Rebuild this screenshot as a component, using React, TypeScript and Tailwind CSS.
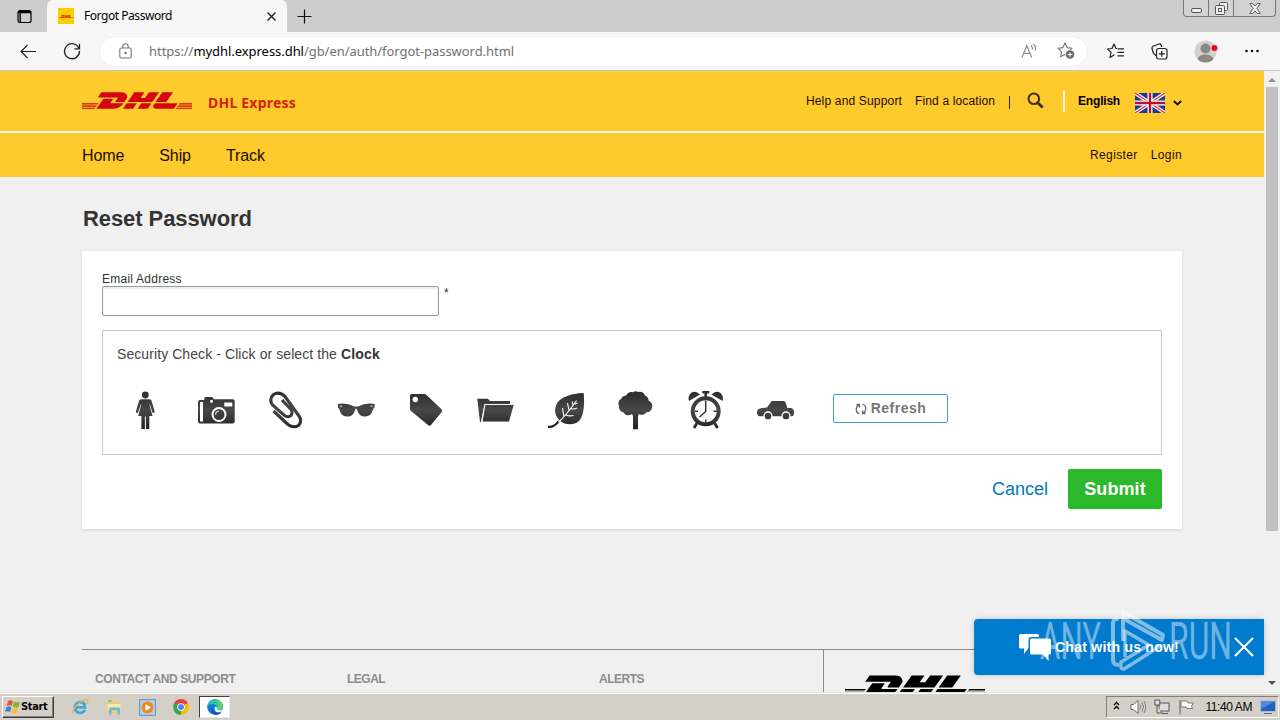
import React from 'react';
import { FaDhl } from 'react-icons/fa';

const INK = 'url(#ink)';

const TitleBar: React.FC = () => (
  <div className="h-8 shrink-0 flex bg-[#cdcdcd]">
    <div className="w-[47px] flex items-center pl-[17px]">
      <svg className="w-[15px] h-[15px]" viewBox="0 0 15 15" fill="none" stroke="#000">
        <rect x="1" y="1.5" width="13" height="12" rx="2" strokeWidth="1.2" />
        <path d="M1 3.2h13M2 2.2h11" strokeWidth="2" />
        <path d="M3.2 4v9" strokeWidth="1.4" />
      </svg>
    </div>
    <div className="w-60 flex items-center rounded-t-md bg-[#f7f7f7] pl-[11px] pr-2.5">
      <div className="w-4 h-4 bg-[#fc0] flex items-center justify-center">
        <FaDhl viewBox="0 205 640 102" preserveAspectRatio="none" className="w-[14px] h-[3px] text-[#d40511]" />
      </div>
      <span className="ml-2.5 text-[12px] leading-4 tracking-[-0.45px] text-black whitespace-nowrap">Forgot Password</span>
      <svg className="ml-auto w-[11px] h-[11px]" viewBox="0 0 11 11" stroke="#222" strokeWidth="1.4">
        <path d="M1.5 1.5l8 8M9.5 1.5l-8 8" />
      </svg>
    </div>
    <div className="pl-2.5 flex items-center">
      <svg className="w-[15px] h-[15px]" viewBox="0 0 15 15" stroke="#111" strokeWidth="1.2">
        <path d="M7.5 .5v14M.5 7.5h14" />
      </svg>
    </div>
    <div className="ml-auto mr-1 w-[93px] h-[17px] flex border border-t-0 border-[#777] rounded-b-[4px] bg-[#d2d2d2]">
      <div className="w-[25px] border-r border-[#777] flex items-end justify-center pb-[3px]">
        <div className="w-[11px] h-[5px] border border-[#555] rounded-[2px] bg-[#eee]" />
      </div>
      <div className="w-[25px] border-r border-[#777] flex items-center justify-center">
        <svg className="w-[13px] h-[13px]" viewBox="0 0 13 13" fill="#eee" stroke="#555">
          <rect x="4.5" y=".5" width="8" height="8" rx="1" />
          <rect x=".5" y="3.5" width="9" height="9" rx="1" />
          <rect x="3.5" y="6.5" width="3" height="3" />
        </svg>
      </div>
      <div className="flex-1 flex items-center justify-center">
        <svg className="w-[12px] h-[11px]" viewBox="0 0 12 11" fill="#eee" stroke="#555" strokeWidth=".9">
          <path d="M.8.5h3L6 3l2.200-2.500h3L8 5.500l3.200 5h-3L6 8l-2.200 2.500h-3L4 5.500z" />
        </svg>
      </div>
    </div>
  </div>
);

const Toolbar: React.FC = () => (
  <div className="h-[39px] shrink-0 flex items-center bg-[#f7f7f7] border-b border-[#c8c8c8]">
    <svg className="ml-5 w-4 h-[15px]" viewBox="0 0 16 15" fill="none" stroke="#222" strokeWidth="1.2">
      <path d="M16 7.500H1M7.500 1L1 7.500 7.500 14" />
    </svg>
    <svg className="ml-[27px] w-[18px] h-[18px]" viewBox="0 0 18 18" fill="none" stroke="#222" strokeWidth="1.3">
      <path d="M16 6.500A7.500 7.500 0 1 0 16.500 9" />
      <path d="M16.500 1.800v5h-5" />
    </svg>
    <div className="ml-[18px] w-[989px] h-[31px] rounded-full bg-white border border-[#f1eff4] flex items-center pl-[19px] pr-3">
      <svg className="w-[13px] h-4" viewBox="0 0 13 16" fill="none" stroke="#777" strokeWidth="1.1">
        <rect x=".8" y="5" width="11.4" height="10" rx="1.5" />
        <path d="M3.800 5V3.500a2.700 2.700 0 0 1 5.400 0V5" />
        <circle cx="6.5" cy="10" r=".7" fill="#777" />
      </svg>
      <div className="ml-[17px] text-[13px] leading-5 tracking-[-0.05px] text-[#707070] whitespace-nowrap">
        https://<span className="text-black">mydhl.express.dhl</span>/gb/en/auth/forgot-password.html
      </div>
      <svg className="ml-auto w-4 h-4" viewBox="0 0 16 16" fill="none" stroke="#888" strokeWidth="1.1">
        <path d="M1 14.500L5.800 2.500l4.800 12M2.700 10.500h6.200" />
        <path d="M10 2.500a4 4 0 0 1 1.300 4M12.300 1a6 6 0 0 1 1.900 6.500" />
      </svg>
      <svg className="ml-5 w-[18px] h-[18px]" viewBox="0 0 18 18" fill="none" stroke="#777" strokeWidth="1.1">
        <path d="M8 1l2.100 4.600 5 .6-3.700 3.500.8 4L8 12.500l-4.400 2.300.9-5L1 6.200l4.900-.6z" strokeLinejoin="round" />
        <circle cx="13" cy="12.5" r="4.5" fill="#666" stroke="#fff" strokeWidth=".6" />
        <path d="M13 10.200v4.600M10.700 12.500h4.600" stroke="#fff" />
      </svg>
    </div>
    <svg className="ml-[19px] w-[17px] h-4" viewBox="0 0 17 16" fill="none" stroke="#222" strokeWidth="1.2">
      <path d="M10 5.500H9L7 1 5 5.500l-4.500.5L4 9.300 3 14.500l4.500-2.700M10.500 5.800H17M10.500 9.300H17M10.500 12.800H17" strokeLinejoin="round" />
    </svg>
    <svg className="ml-[27px] w-[17px] h-[17px]" viewBox="0 0 17 17" fill="none" stroke="#222" strokeWidth="1.2">
      <path d="M5 12.500L2.500 10.500 1 5.500Q.7 4 2 3.300L8 1q1.500-.4 2 1l.8 2" />
      <rect x="5.5" y="5.5" width="10.5" height="10.5" rx="2.2" />
      <path d="M10.750 7.800v6M7.800 10.800h6" />
    </svg>
    <svg className="ml-[26px] w-6 h-[23px]" viewBox="0 0 24 23">
      <circle cx="11.5" cy="11.5" r="11" fill="#d3d1ce" />
      <circle cx="11.5" cy="8.5" r="5" fill="#8d8785" />
      <path d="M3.500 19q1.500-4.500 8-4.500t8 4.500q-3 3.500-8 3.500t-8-3.500z" fill="#8d8785" />
      <circle cx="20.5" cy="8" r="3" fill="#e0101c" />
    </svg>
    <svg className="ml-[26px] w-4 h-4" viewBox="0 0 16 16" fill="#111">
      <circle cx="2.5" cy="8" r="1.3" />
      <circle cx="8" cy="8" r="1.3" />
      <circle cx="13.5" cy="8" r="1.3" />
    </svg>
  </div>
);

const Flag: React.FC = () => (
  <svg className="w-[30px] h-5" viewBox="0 0 30 20">
    <rect width="30" height="20" rx="1" fill="#1b3a8c" />
    <path d="M0 0l30 20M30 0L0 20" stroke="#fff" strokeWidth="3.6" />
    <path d="M0 0l30 20M30 0L0 20" stroke="#d8324a" strokeWidth="1.3" />
    <path d="M15 0v20M0 10h30" stroke="#fff" strokeWidth="5" />
    <path d="M15 0v20M0 10h30" stroke="#b8102e" strokeWidth="2.4" />
  </svg>
);

const SiteHeader: React.FC = () => (
  <header className="shrink-0 text-[#1a0d00] bg-[#ffca2c]">
    <div className="h-[60px] pl-[82px] pr-[82px] flex">
      <FaDhl viewBox="0 209 640 93" preserveAspectRatio="none" className="mt-[21px] w-[110px] h-[17px] text-[#d40511]" />
      <span className="ml-4 mt-[22px] font-['Noto_Sans'] font-bold text-[14px] leading-5 tracking-[0.22px] text-[#d8200f] whitespace-nowrap">DHL Express</span>
      <div className="ml-auto flex items-start text-[12px] leading-4 whitespace-nowrap">
        <span className="mt-[22px] tracking-[0.17px]">Help and Support</span>
        <span className="ml-[13px] mt-[22px] tracking-[0.13px]">Find a location</span>
        <div className="ml-3.5 mt-[25px] w-px h-[13px] bg-[#222]" />
        <svg className="ml-[17px] mt-[21px] w-[17px] h-[17px]" viewBox="0 0 17 17" fill="none" stroke="#3c2c0c">
          <circle cx="6.8" cy="6.8" r="5.3" strokeWidth="2" />
          <path d="M10.700 10.700l5 4.800" strokeWidth="2.8" />
        </svg>
        <div className="ml-[19px] mt-5 w-0.5 h-[21px] bg-[#fff6d8]" />
        <span className="ml-[13px] mt-[22px] font-bold text-black tracking-[-0.2px]">English</span>
        <div className="ml-[15px] mt-[22px]"><Flag /></div>
        <svg className="ml-2 mt-[29px] w-[9px] h-[6px]" viewBox="0 0 9 6" fill="none" stroke="#111" strokeWidth="1.9">
          <path d="M.8 1l3.700 3.500L8.200 1" />
        </svg>
      </div>
    </div>
    <div className="h-0.5 bg-[#fff9e6]" />
    <nav className="h-11 px-[82px] flex items-center text-[16px]">
      <div className="flex gap-[35px] pt-0.5 tracking-[-0.1px]">
        <span>Home</span>
        <span>Ship</span>
        <span>Track</span>
      </div>
      <div className="ml-auto flex gap-[13px] text-[12px] tracking-[0.38px]">
        <span>Register</span>
        <span>Login</span>
      </div>
    </nav>
  </header>
);

const captchaIcons: { name: string; art: React.ReactNode }[] = [
  {
    name: 'Woman',
    art: (
      <>
        <circle cx="20.3" cy="5" r="3.4" />
        <path d="M16 9.300h8.700q1.300 0 1.800 1.500l3.200 10.500q.2 1.500-1.200 1.700-1 0-1.400-1.200L25 14.500h-.6L27.500 26h-3.200v13h-3.400V26.500h-1V39h-3.500V26h-3.200l3-11.500h-.6l-2.200 7.300q-.5 1.300-1.500 1.200-1.300-.3-1-1.700l3.200-10.500q.6-1.500 1.900-1.500z" />
      </>
    ),
  },
  {
    name: 'Camera',
    art: (
      <>
        <path d="M5 10h4.300V8.500Q9.300 7 10.800 7h6q1.500 0 1.500 1.500l.4.800h19q2 0 2 2V31.500q0 2-2 2H5q-2 0-2-2V12q0-2 2-2z" />
        <path d="M5 12h3v19.500H5zM29.300 12.500h8v4h-8z" fill="#fff" />
        <circle cx="16.5" cy="11.3" r="1.5" fill="#fff" />
        <circle cx="24" cy="24.5" r="6.5" stroke="#fff" strokeWidth="2" />
        <path d="M20.500 25q0-3.500 3.500-3.800" fill="none" stroke="#ccc" strokeWidth="1.2" />
      </>
    ),
  },
  {
    name: 'Paperclip',
    art: (
      <path
        d="M8.500 21L23 34.500Q28.500 38.500 33.500 35.500 37.500 31 34 26L20 6.500Q14.500 1 8.500 4.500 3.500 9 7.500 15L19.500 25.500Q23.500 28 26 25.500 28 22.500 26 19.500L17 10"
        fill="none"
        stroke={INK}
        strokeWidth="3.1"
      />
    ),
  },
  {
    name: 'Sunglasses',
    art: (
      <>
        <path d="M2.800 14q9-1.500 16.500 2.500h3.800Q30.500 12.500 39.700 14l-.4 4q-1.200 0-1.500 2-1.500 6-7.500 6.500-6 .3-8-6-.5-2-1.200-2t-1.200 2q-2 6.500-8 6-6-.5-7.300-6.500-.3-2-1.500-2z" />
        <path d="M5 15.500h2v1.500H5zM35.500 15.500h2v1.500h-2z" fill="#bbb" />
      </>
    ),
  },
  {
    name: 'Tag',
    art: (
      <>
        <path d="M6.500 4h12.500q1.500 0 2.500 1L36.500 19.200q1.300 1.500 0 3L26 35q-1.500 1.500-3 0L6 21q-1-1-1-2.500V5.500Q5 4 6.500 4z" />
        <circle cx="10.3" cy="9.5" r="2.7" fill="#fff" />
      </>
    ),
  },
  {
    name: 'Folder',
    art: (
      <>
        <path d="M2.300 8.700h10.500L15 11h20v3H9.500L5.800 32H5z" />
        <path d="M10 14.500h29.300L34.300 32H7z" stroke="#fff" strokeWidth=".9" />
      </>
    ),
  },
  {
    name: 'Leaf',
    art: (
      <>
        <path d="M38.700 3Q40.500 24 34 31q-6 5-14.500 2.500L15 31Q6.500 22 12.500 12.500 19 4 38.700 3z" />
        <path d="M3 36.800q6 .8 11-6" fill="none" stroke="#222" strokeWidth="2.2" />
        <path d="M13.500 32Q20 27 31.500 10.500M19 27l-1.500-9M24 20.500L22.500 13M28 15.500l-.8-4M20.500 25q4 1.500 8 .5M25 18.500q4 1.200 7-.5M28.500 14.500l4-1.500" fill="none" stroke="#fff" strokeWidth="1.1" />
      </>
    ),
  },
  {
    name: 'Tree',
    art: (
      <path d="M11 5.500q2.500-4.500 7-3.300 2.500-2 5-.2 5-1.300 7 3.500 3.500 1.300 3.500 5 5 3 3.500 7.500-1.500 4.500-5.500 4.300-3 4-7.500 1.700L23 26v13.300h-5V26l-1-2q-5.500 3-8.500-1.500-5-1.500-4.500-6.500-2-5 2.500-7.500.5-2.500 4.500-3z" />
    ),
  },
  {
    name: 'Clock',
    art: (
      <>
        <circle cx="20.7" cy="21.3" r="13" fill="#fff" stroke={INK} strokeWidth="4" />
        <path d="M4 11Q2.500 6 6 3q4.500-3 9 1.500zM37.500 11Q39 6 35.500 3 31 0 26.500 4.500zM17.300 1h7v2.500H22V7h-2.600V3.500h-2.100z" />
        <path d="M12 33l-3 5M29.500 33l3 5" fill="none" stroke={INK} strokeWidth="2.8" />
        <path d="M20.700 10.500v11L14.500 27M20.700 29.500v3M9.500 21.300h3.500M28.500 21.300h3.500" fill="none" stroke="#333" strokeWidth="1.5" />
      </>
    ),
  },
  {
    name: 'Car',
    art: (
      <>
        <path d="M17.500 11h11q1.500 0 2 1.500l2 5.500h3.500q3 .5 3 4.500t-2.500 3.700H5Q2 26 2 22.500q0-3.500 3-4 4-.8 7-1l4-5.500q.5-1 1.500-1z" />
        <circle cx="13" cy="26" r="4" stroke="#fff" strokeWidth="1.3" />
        <circle cx="31" cy="26" r="4" stroke="#fff" strokeWidth="1.3" />
      </>
    ),
  },
];

const SecurityCheck: React.FC = () => (
  <div className="mt-3.5 h-[125px] border border-[#c8c8c8] pl-3.5 pt-[13px]">
    <p className="text-[14px] leading-5 tracking-[0.08px] text-[#444] whitespace-nowrap">
      Security Check - Click or select the <b className="tracking-[0.2px] text-[#333]">Clock</b>
    </p>
    <div className="mt-[26px] pl-2 flex gap-[30px]">
      {captchaIcons.map((icon) => (
        <svg key={icon.name} aria-label={icon.name} className="w-10 h-10" viewBox="0 0 40 40" fill={INK}>
          {icon.art}
        </svg>
      ))}
      <button className="ml-2 mt-1 w-[115px] h-[29px] rounded-[2px] border border-[#3b9fd8] bg-white flex items-center justify-center gap-1 text-[14px] font-bold tracking-[0.5px] text-[#777]">
        <svg className="w-3 h-3" viewBox="0 0 12 12" fill="none" stroke="#666" strokeWidth="1.3">
          <path d="M4.500 11Q1 9.500 1.200 6 1.500 3 4 1.800M1.500 1.500h3v3M7.500 1Q11 2.500 10.800 6 10.500 9 8 10.200M10.500 10.500h-3v-3" />
        </svg>
        Refresh
      </button>
    </div>
  </div>
);

const ResetForm: React.FC = () => (
  <main className="px-[82px]">
    <h1 className="mt-[26px] h-8 pl-px leading-8 text-[22px] font-bold tracking-[-0.08px] text-[#333]">Reset Password</h1>
    <section className="mt-4 h-[278px] bg-white px-5 pt-[21px] shadow-[0_1px_3px_rgba(0,0,0,0.12)]">
      <label className="block h-3.5 text-[12px] leading-[15px] tracking-[0.24px] text-[#333]">Email Address</label>
      <div className="flex">
        <input className="w-[337px] h-[30px] rounded-[2px] border border-[#999] bg-white shadow-[inset_0_2px_2px_rgba(0,0,0,0.08)]" />
        <span className="ml-[5px] text-[12px] leading-[14px] text-[#333]">*</span>
      </div>
      <SecurityCheck />
      <div className="mt-3.5 flex justify-end items-center text-[18px]">
        <a className="text-[#007bbd]">Cancel</a>
        <button className="ml-5 w-[94px] h-10 rounded-[2px] bg-[#2bb92b] font-bold tracking-[0.1px] text-white">Submit</button>
      </div>
    </section>
  </main>
);

const SiteFooter: React.FC = () => (
  <footer className="mt-[120px] mx-[82px] h-[43px] flex border-t border-[#8c8c8c] text-[12px] leading-4 font-bold tracking-[-0.5px] text-[#8c8c8c] overflow-hidden">
    <div className="w-[742px] border-r border-[#8c8c8c] pl-[13px] pt-[21px] flex">
      <span className="w-[252px] tracking-[-0.4px]">CONTACT AND SUPPORT</span>
      <span className="w-[252px]">LEGAL</span>
      <span>ALERTS</span>
    </div>
    <FaDhl viewBox="0 209 640 93" preserveAspectRatio="none" className="shrink-0 ml-[21px] mt-[25px] w-[140px] h-[21px] text-black" />
  </footer>
);

const Scrollbar: React.FC = () => (
  <div className="w-4 shrink-0 bg-[#f1f1f1] flex flex-col items-center">
    <svg className="w-2 h-4" viewBox="0 0 8 16" fill="#8b8b8b"><path d="M0 11l4-4 4 4z" /></svg>
    <div className="w-3 h-[444px] bg-[#c1c1c1]" />
    <svg className="mt-auto mb-px w-2 h-4" viewBox="0 0 8 16" fill="#505050"><path d="M0 6l4 4 4-4z" /></svg>
  </div>
);

const ChatWidget: React.FC = () => (
  <div className="absolute left-[974px] top-[548px] w-[290px] h-14 rounded-l-[4px] bg-[#007bcd] shadow-[0_0_5px_rgba(0,0,0,0.2)] flex items-center pl-[45px]">
    <svg className="w-[33px] h-[27px]" viewBox="0 0 33 27" fill="#fff">
      <path d="M1.500 0h17q1.500 0 1.500 1.500V3h-8q-2.500 0-2.500 2.500V14L5 20v-5.500H1.500Q0 14.500 0 13V1.500Q0 0 1.500 0z" />
      <path d="M12.500 4.500h18q1.500 0 1.500 1.500v13q0 1.500-1.500 1.500H29.500V27L24 20.500H12.500Q11 20.500 11 19V6q0-1.500 1.500-1.500z" />
    </svg>
    <span className="ml-[3px] text-[14px] font-bold tracking-[0.25px] text-white whitespace-nowrap">Chat with us now!</span>
    <svg className="ml-auto mr-2.5 w-5 h-5" viewBox="0 0 20 20" stroke="#fff" strokeWidth="2">
      <path d="M1 1l18 18M19 1L1 19" />
    </svg>
  </div>
);

const Watermark: React.FC = () => (
  <svg className="absolute left-[1036px] top-[536px] w-[210px] h-[70px] pointer-events-none" viewBox="0 0 210 70" fill="#fff" fillOpacity=".45">
    <g fontFamily="Roboto, sans-serif" fontWeight="400" fontSize="52">
      <text x="4" y="52" textLength="61" lengthAdjust="spacingAndGlyphs">ANY</text>
      <text x="133" y="52" textLength="63" lengthAdjust="spacingAndGlyphs">RUN</text>
    </g>
    <g fill="none" stroke="#fff" strokeOpacity=".5" strokeWidth="4" strokeLinejoin="round">
      <path d="M83 12q-6-1-6 5v36q0 5 6 5" />
      <path d="M87 34V5l40 23-1 5-38-21" />
      <path d="M126 38L88 62q-4 1-3-7l28-17-24-14v26" strokeWidth="3.4" />
    </g>
  </svg>
);

const StartButton: React.FC = () => (
  <button className="w-[52px] h-[22px] flex items-center pl-0.5 bg-[#d4d0c8] border border-t-white border-l-white border-r-[#404040] border-b-[#404040] shadow-[inset_-1px_-1px_0_#808080] font-['DejaVu_Sans_Condensed','DejaVu_Sans'] text-[11px] font-bold tracking-[-0.35px] text-black">
    <svg className="w-4 h-4" viewBox="0 0 16 16">
      <path d="M3 2q2.500-1.500 5 0L6.700 7q-2.500-1.500-5 0z" fill="#e8552b" />
      <path d="M9 2.500q2.500 1.500 6 .3L13.500 8q-3 1-5.800-.5z" fill="#7cb83a" />
      <path d="M1.400 8.200q2.500-1.500 5 0L5 13q-2.500-1.500-5 0z" fill="#3b7fd0" />
      <path d="M7.400 8.700q2.800 1.500 5.800.4L11.800 14q-3 1-5.800-.5z" fill="#f6c12c" />
    </svg>
    Start
  </button>
);

const Taskbar: React.FC = () => (
  <div className="h-7 shrink-0 flex items-center pl-0.5 pr-px pt-px bg-[#d4d0c8] border-t border-[#e4e2dd] shadow-[inset_0_1px_0_#fff]">
    <StartButton />
    <svg className="ml-[17px] w-[18px] h-[18px]" viewBox="0 0 18 18" fill="none">
      <path d="M14 12Q12 15 8.800 14.800 4 14 4 9.500T8.800 4Q14 4 14 9.300H4.500" stroke="#39a7e0" strokeWidth="2.8" />
      <path d="M2.500 15.500Q0 13 6 7T16.500 2q1 1-.5 4" stroke="#efb92b" strokeWidth="1.3" />
    </svg>
    <svg className="ml-4 w-[18px] h-[18px]" viewBox="0 0 18 18">
      <path d="M2 4l1-1.500h5L9 4h6v11H2z" fill="#e9cf74" />
      <path d="M3.500 2h3v2h-3z" fill="#7ac36a" />
      <path d="M2.500 6h13v6h-13z" fill="#f7e9a8" />
      <path d="M4 16.500V11q0-1.500 1.500-1.500h8q1.500 0 1.500 1.500v5.500h-2.500V12h-6v4.500z" fill="#6db4de" />
    </svg>
    <svg className="ml-4 w-[17px] h-[17px]" viewBox="0 0 17 17">
      <rect x=".7" y=".7" width="15.6" height="15.6" fill="#b4d3ee" stroke="#5a8dc0" />
      <circle cx="8.5" cy="8.5" r="6" fill="#f08a1d" />
      <path d="M6.500 5l5.500 3.500L6.500 12z" fill="#fff" />
    </svg>
    <div className="ml-[17px] w-4 h-4 rounded-full bg-[conic-gradient(from_-60deg,#ea4335_0_120deg,#fbbc05_120deg_240deg,#34a853_240deg_360deg)] flex items-center justify-center">
      <div className="w-2 h-2 rounded-full bg-[#4285f4] border border-white" />
    </div>
    <div className="ml-2.5 w-[31px] h-[22px] flex items-center justify-center bg-white border border-t-[#404040] border-l-[#404040] border-r-[#e8e8e8] border-b-[#e8e8e8]">
      <svg className="w-4 h-4" viewBox="0 0 16 16">
        <circle cx="8" cy="8" r="7.8" fill="#1279cf" />
        <path d="M.3 7Q1.500.5 8 .2q7.500.3 7.800 7Q15.500 11 11 11q-2-.5-1-2.500 0-3-4-3.500-4 0-5.700 2z" fill="#35bfae" />
        <path d="M9 .3q6.500 1 6.800 7-.3 3.500-4.500 3.700-2-.3-1.200-1.800Q13 4 9 .3z" fill="#5bd06c" />
        <path d="M5.500 8q0 5.500 5 6.200 2.500.3 4.300-1.200-2 3-6.500 2.800Q3 14 5.500 8z" fill="#0c4f9c" />
        <path d="M10 8.500q-1 2 1.500 2.600 2 .4 4-.8l-1.200 2.200Q8 15 7.500 9q.5-2 2.500-.5z" fill="#fff" />
      </svg>
    </div>
    <div className="ml-auto w-[173px] h-[22px] flex items-center pl-1.5 pr-0.5 border border-t-[#808080] border-l-[#808080] border-r-white border-b-white">
      <svg className="w-[7px] h-[9px] mb-1" viewBox="0 0 7 9" fill="none" stroke="#000" strokeWidth="1.3">
        <path d="M1 4l2.500-2.500L6 4M1 8l2.500-2.500L6 8" />
      </svg>
      <svg className="ml-2.5 w-4 h-4" viewBox="0 0 16 16" fill="#fff" stroke="#666">
        <path d="M1 5.500h2.500L8 1.500v13l-4.500-4H1z" />
        <path d="M10 5.500q1.500 2.500 0 5M12 3.500q3 4.500 0 9M14 2q3.500 6 0 12" fill="none" strokeWidth=".8" />
      </svg>
      <svg className="ml-2 w-4 h-4" viewBox="0 0 16 16" fill="#ddd" stroke="#555">
        <rect x="5" y="4" width="10" height="8" />
        <path d="M8 12v2.500h6M.8 1h5v5h-5zM3 6v8h4" />
      </svg>
      <svg className="ml-2 w-[17px] h-4" viewBox="0 0 17 16" fill="#fff" stroke="#777">
        <path d="M2 1v14.500" strokeWidth="1.3" />
        <path d="M3 2h6l1 2h5.500l-2 3 1 2.500H9l-1-1.500H3z" />
      </svg>
      <span className="ml-auto font-['Liberation_Sans'] text-[12px] leading-4 tracking-[-0.4px] text-black whitespace-nowrap">11:40 AM</span>
      <svg className="ml-2 w-4 h-4" viewBox="0 0 16 16">
        <rect x=".5" y="2" width="15" height="10.5" fill="#2360c0" stroke="#a9bcd6" />
        <path d="M1 2.500h13.500L1 10z" fill="#4e8be0" />
        <path d="M4 14.500h8" stroke="#666" />
      </svg>
    </div>
  </div>
);

const App: React.FC = () => (
  <div className="w-[1280px] h-[720px] overflow-hidden flex flex-col bg-[#f0f0f0] font-['Noto_Sans',sans-serif]">
    {/* shared gradient for the captcha icons */}
    <svg className="absolute w-0 h-0">
      <defs>
        <linearGradient id="ink" gradientUnits="userSpaceOnUse" x1="0" y1="0" x2="0" y2="40">
          <stop offset="0" stopColor="#2a2a2a" />
          <stop offset=".5" stopColor="#484848" />
          <stop offset="1" stopColor="#222" />
        </linearGradient>
      </defs>
    </svg>
    <TitleBar />
    <Toolbar />
    <div className="relative h-[621px] shrink-0 flex font-['Liberation_Sans',Arial,sans-serif]">
      <div className="flex-1 overflow-hidden">
        <SiteHeader />
        <ResetForm />
        <SiteFooter />
      </div>
      <Scrollbar />
      <ChatWidget />
      <Watermark />
    </div>
    <Taskbar />
  </div>
);

export default App;
